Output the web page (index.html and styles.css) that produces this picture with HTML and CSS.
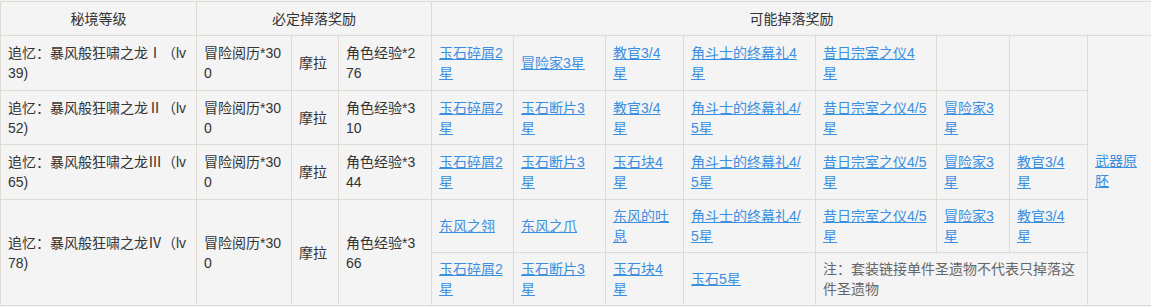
FILE: index.html
```html
<!DOCTYPE html>
<html lang="zh-CN">
<head>
<meta charset="utf-8">
<title>秘境掉落</title>
<link rel="stylesheet" href="styles.css">
</head>
<body>
<table class="drops">
  <colgroup>
    <col class="c-name">
    <col class="c-exp">
    <col class="c-mora">
    <col class="c-cexp">
    <col class="c-a">
    <col class="c-b">
    <col class="c-c">
    <col class="c-d">
    <col class="c-e">
    <col class="c-f">
    <col class="c-g">
    <col class="c-h">
  </colgroup>
  <thead>
    <tr>
      <th>秘境等级</th>
      <th colspan="3">必定掉落奖励</th>
      <th colspan="8">可能掉落奖励</th>
    </tr>
  </thead>
  <tbody>
    <tr>
      <td>追忆：暴风般狂啸之龙Ⅰ（lv39)</td>
      <td>冒险阅历*300</td>
      <td>摩拉</td>
      <td>角色经验*276</td>
      <td><a href="#">玉石碎屑2星</a></td>
      <td><a href="#">冒险家3星</a></td>
      <td><a href="#">教官3/4星</a></td>
      <td><a href="#">角斗士的终幕礼4星</a></td>
      <td><a href="#">昔日宗室之仪4星</a></td>
      <td></td>
      <td></td>
      <td rowspan="5"><a href="#">武器原胚</a></td>
    </tr>
    <tr class="short">
      <td>追忆：暴风般狂啸之龙Ⅱ（lv52)</td>
      <td>冒险阅历*300</td>
      <td>摩拉</td>
      <td>角色经验*310</td>
      <td><a href="#">玉石碎屑2星</a></td>
      <td><a href="#">玉石断片3星</a></td>
      <td><a href="#">教官3/4星</a></td>
      <td><a href="#">角斗士的终幕礼4/5星</a></td>
      <td><a href="#">昔日宗室之仪4/5星</a></td>
      <td><a href="#">冒险家3星</a></td>
      <td></td>
    </tr>
    <tr>
      <td>追忆：暴风般狂啸之龙Ⅲ（lv65)</td>
      <td>冒险阅历*300</td>
      <td>摩拉</td>
      <td>角色经验*344</td>
      <td><a href="#">玉石碎屑2星</a></td>
      <td><a href="#">玉石断片3星</a></td>
      <td><a href="#">玉石块4星</a></td>
      <td><a href="#">角斗士的终幕礼4/5星</a></td>
      <td><a href="#">昔日宗室之仪4/5星</a></td>
      <td><a href="#">冒险家3星</a></td>
      <td><a href="#">教官3/4星</a></td>
    </tr>
    <tr class="tight">
      <td rowspan="2">追忆：暴风般狂啸之龙Ⅳ（lv78)</td>
      <td rowspan="2">冒险阅历*300</td>
      <td rowspan="2">摩拉</td>
      <td rowspan="2">角色经验*366</td>
      <td><a href="#">东风之翎</a></td>
      <td><a href="#">东风之爪</a></td>
      <td><a href="#">东风的吐息</a></td>
      <td><a href="#">角斗士的终幕礼4/5星</a></td>
      <td><a href="#">昔日宗室之仪4/5星</a></td>
      <td><a href="#">冒险家3星</a></td>
      <td><a href="#">教官3/4星</a></td>
    </tr>
    <tr class="tight">
      <td><a href="#">玉石碎屑2星</a></td>
      <td><a href="#">玉石断片3星</a></td>
      <td><a href="#">玉石块4星</a></td>
      <td><a href="#">玉石5星</a></td>
      <td colspan="3" class="note">注：套装链接单件圣遗物不代表只掉落这件圣遗物</td>
    </tr>
  </tbody>
</table>
</body>
</html>
```
FILE: styles.css
```css
html, body {
  margin: 0;
  padding: 0;
  background: #f4f4f4;
}

body {
  padding-top: 1px;
  font-family: "Liberation Sans", "Noto Sans CJK SC", sans-serif;
  font-size: 14px;
  line-height: 20px;
  color: #333333;
}

.drops {
  border-collapse: collapse;
  table-layout: fixed;
  width: 1151px;
  background: #f4f4f4;
}

.c-name { width: 196px; }
.c-exp { width: 95px; }
.c-mora { width: 47px; }
.c-cexp { width: 93px; }
.c-a { width: 82px; }
.c-b { width: 92px; }
.c-c { width: 78px; }
.c-d { width: 132px; }
.c-e { width: 121px; }
.c-f { width: 73px; }
.c-g { width: 78px; }
.c-h { width: 64px; }

.drops th,
.drops td {
  border: 1px solid #e0dad3;
  padding: 7px 9px 7px 7px;
  word-break: break-all;
  vertical-align: middle;
}

.drops th {
  font-weight: normal;
  text-align: center;
  padding: 7px 8px 6px 8px;
}

.drops td {
  text-align: left;
}

.drops tr.short td {
  padding-bottom: 6px;
}

.drops tr.tight td {
  padding-top: 6px;
  padding-bottom: 6px;
}

.drops a {
  color: #3b8fe0;
  text-decoration: underline;
}

.drops .note {
  color: #666666;
}
```
